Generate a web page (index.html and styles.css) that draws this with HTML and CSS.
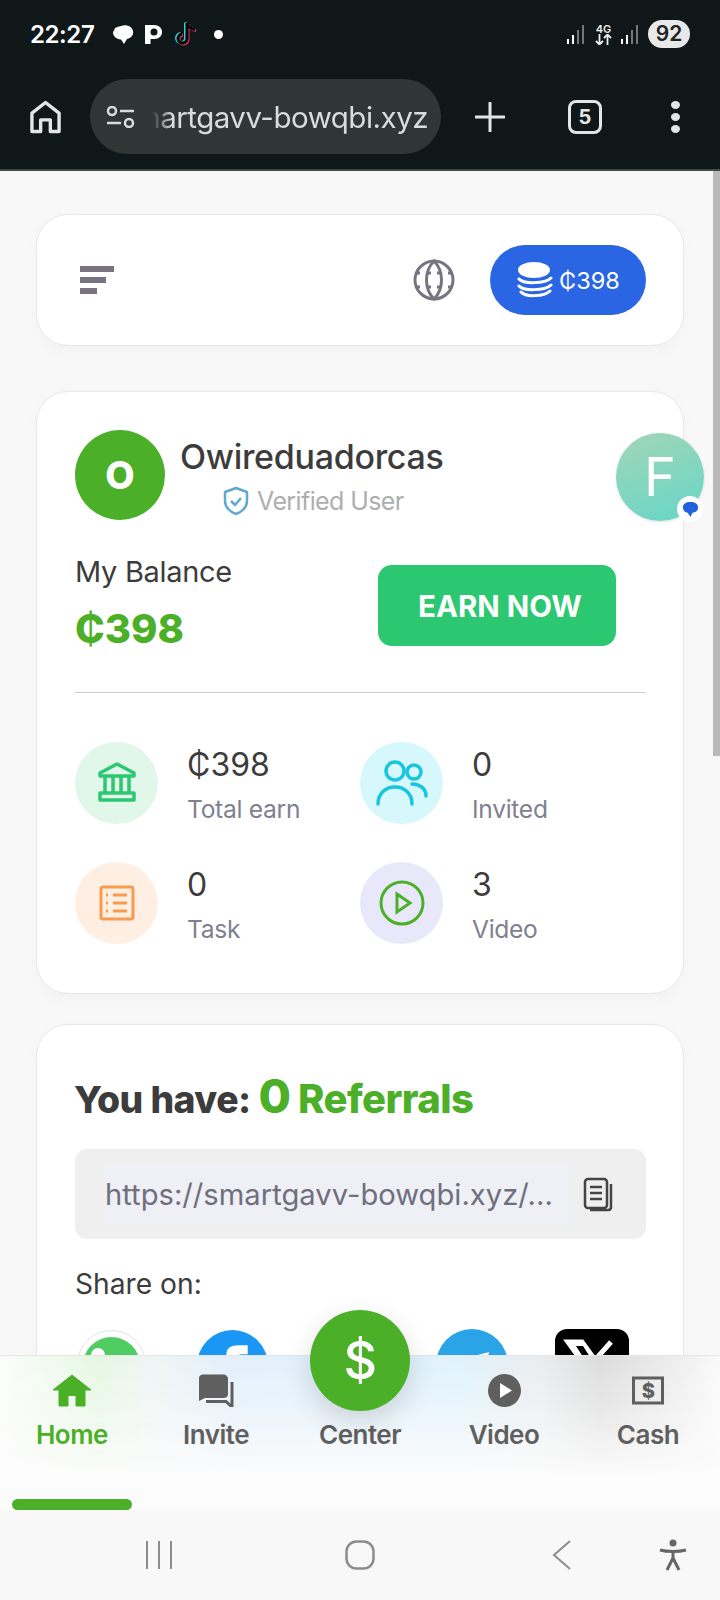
FILE: index.html
```html
<!DOCTYPE html>
<html lang="en">
<head>
	<title>Home</title>
	<meta charset="utf-8">
	<link rel="stylesheet" href="styles.css">
</head>
<body>
	<div class="topbars">
		<div class="status">
			<span class="time">22:27</span>
			<svg class="st-bubble" viewBox="0 0 22 21"><path d="M9 2C14 0 20 2 21 7C22 11 19 14 15 15L12 20L9 15.500C4 15 1 12 1 8.500C1 8 1.500 7 2.500 6C2 5 3 3 9 2Z" fill="#fff"/></svg>
			<svg class="st-p" viewBox="0 0 17 20"><path d="M0 1H9C14 1 17 4 17 8C17 12 14 15 9.500 15H5.500V20H0ZM9 4.500A3.500 3.500 0 1 0 9 11.500A3.500 3.500 0 1 0 9 4.500Z" fill="#fff" fill-rule="evenodd"/></svg>
			<svg class="st-tt" viewBox="0 0 24 26">
				<path d="M14 2V17.500A4.500 4.500 0 1 1 9 13M14 2C15 6 18 8 22 8.500" fill="none" stroke="#2bd3d8" stroke-width="3" transform="translate(-1.500 -.5)"/>
				<path d="M14 2V17.500A4.500 4.500 0 1 1 9 13M14 2C15 6 18 8 22 8.500" fill="none" stroke="#e8305a" stroke-width="3" transform="translate(1 1)"/>
				<path d="M14 2V17.500A4.500 4.500 0 1 1 9 13M14 2C15 6 18 8 22 8.500" fill="none" stroke="#000" stroke-width="3"/>
			</svg>
			<span class="st-dot"></span>
			<span class="st-right">
				<svg class="st-signal" viewBox="0 0 19 19"><path d="M1 14v5M6 10v9" stroke="#fff" stroke-width="2"/><path d="M11 5v14M16 0v19" stroke="#777" stroke-width="2"/></svg>
				<span class="st-net"><b>4G</b><svg viewBox="0 0 17 11"><path d="M4.500 0V10M1 7L4.500 10.500L8 7M12.500 11V1M9 4L12.500 .5L16 4" fill="none" stroke="#eee" stroke-width="1.800"/></svg></span>
				<svg class="st-signal" viewBox="0 0 19 19"><path d="M1 14v5M6 10v9" stroke="#fff" stroke-width="2"/><path d="M11 5v14M16 0v19" stroke="#777" stroke-width="2"/></svg>
				<span class="battery">92</span>
			</span>
		</div>
		<div class="toolbar">
			<svg class="tb-home" viewBox="0 0 32 34"><path d="M2 32V13L16 2L30 13V32H21V20H11V32Z" fill="none" stroke="#e3e6e6" stroke-width="3.500" stroke-linejoin="round"/></svg>
			<div class="urlbar">
				<svg class="tb-tune" viewBox="0 0 29 22" fill="none" stroke="#d8dcdc" stroke-width="2.500"><circle cx="6" cy="5" r="4"/><path d="M14 5H28M1 17H15"/><circle cx="23" cy="17" r="4"/></svg>
				<div class="url"><span>smartgavv-bowqbi.xyz</span></div>
			</div>
			<svg class="tb-plus" viewBox="0 0 30 30"><path d="M15 1V29M1 15H29" stroke="#e3e6e6" stroke-width="3" stroke-linecap="round"/></svg>
			<span class="tabs">5</span>
			<span class="menu"><i></i><i></i><i></i></span>
		</div>
	</div>

	<div class="page">
		<div class="card topcard">
			<div class="filter"><i></i><i></i><i></i></div>
			<svg class="globe" viewBox="0 0 42 42" fill="none" stroke="#77747f" stroke-width="3"><circle cx="21" cy="21" r="19"/><path d="M21 2C11 12 11 30 21 40C31 30 31 12 21 2Z"/><path d="M15 14H18M24 14H27M15 28H18M24 28H27M3 14H7M35 14H39M3 28H7M35 28H39"/></svg>
			<div class="coinpill">
				<svg class="coins" viewBox="0 0 36 36"><ellipse cx="17" cy="8" rx="16" ry="8" fill="#fff"/><path d="M2 17C6 22 28 22 34 16M2 24C6 29 28 29 34 23M4 30C8 35 27 35 33 29" fill="none" stroke="#fff" stroke-width="3" stroke-linecap="round"/></svg>
				<span>₵398</span>
			</div>
		</div>

		<div class="card maincard">
			<div class="profile">
				<div class="avatar">O</div>
				<div>
					<div class="username">Owireduadorcas</div>
					<div class="verified">
						<svg viewBox="0 0 26 30" fill="none"><path d="M13 2L24 6V15C24 21 19 26 13 28C7 26 2 21 2 15V6Z" stroke="#5ea9cc" stroke-width="2.500" stroke-linejoin="round"/><path d="M8 15L12 19L18 12" stroke="#5ea9cc" stroke-width="2.500"/></svg>
						<span>Verified User</span>
					</div>
				</div>
			</div>
			<div class="balance">
				<div>
					<div class="bal-label">My Balance</div>
					<div class="bal-value">₵398</div>
				</div>
				<div class="earn">EARN NOW</div>
			</div>
			<div class="divider"></div>
			<div class="stats">
				<div class="stat">
					<div class="stat-ic green">
						<svg viewBox="0 0 40 42" fill="none" stroke="#2bc871" stroke-width="3.500" stroke-linejoin="round"><path d="M3 14V11L20 2L37 11V14ZM8 15V30M16 15V30M24 15V30M32 15V30M3 31H37V38H3Z"/></svg>
					</div>
					<div><div class="num">₵398</div><div class="lbl">Total earn</div></div>
				</div>
				<div class="stat">
					<div class="stat-ic cyan">
						<svg viewBox="0 0 52 46" fill="none" stroke="#18c6e0" stroke-width="3.500" stroke-linecap="round"><circle cx="19" cy="11" r="9"/><path d="M2 44C2 34 9 27 19 27C29 27 36 34 36 44"/><circle cx="38" cy="12" r="7"/><path d="M36 24C43 24 50 28 50 36"/></svg>
					</div>
					<div><div class="num">0</div><div class="lbl">Invited</div></div>
				</div>
				<div class="stat">
					<div class="stat-ic orange">
						<svg viewBox="0 0 36 36" fill="none" stroke="#f79c4f" stroke-width="3"><rect x="2" y="2" width="32" height="32" rx="2"/><path d="M14 10H28M14 18H28M14 26H28M7 10H9M7 18H9M7 26H9"/></svg>
					</div>
					<div><div class="num">0</div><div class="lbl">Task</div></div>
				</div>
				<div class="stat">
					<div class="stat-ic violet">
						<svg viewBox="0 0 46 46" fill="none" stroke="#4caf28" stroke-width="3"><circle cx="23" cy="23" r="21"/><path d="M18 14L31 23L18 32Z"/></svg>
					</div>
					<div><div class="num">3</div><div class="lbl">Video</div></div>
				</div>
			</div>
		</div>

		<div class="card refcard">
			<div class="ref-title">You have: <em class="big">0</em> <em class="refs">Referrals</em></div>
			<div class="linkbox">
				<div class="linktext">https://smartgavv-bowqbi.xyz/...</div>
				<svg class="copy" viewBox="0 0 30 35" fill="none" stroke="#444" stroke-width="2.500"><rect x="2" y="2" width="22" height="29" rx="3"/><path d="M7 10H19M7 16H19M7 22H19"/><path d="M28 7V30C28 32 27 33 25 33H7"/></svg>
			</div>
			<div class="share-label">Share on:</div>
			<div class="shares">
				<svg class="sh-wa" viewBox="0 0 69 69"><circle cx="34.500" cy="34.500" r="34" fill="#fff" stroke="#e2e2e2"/><circle cx="34.500" cy="35.500" r="28.500" fill="#50cd62"/><circle cx="21" cy="25" r="7" fill="#fff"/></svg>
				<svg class="sh-fb" viewBox="0 0 70 70"><circle cx="35" cy="35" r="35" fill="#1a97f5"/><path d="M29 70V40H21V28H29V24C29 18 33 15 41 15H50V24H44C41 24 40 25 40 28V30H50V40H40V70Z" fill="#fff"/></svg>
				<svg class="sh-tg" viewBox="0 0 72 72"><circle cx="36" cy="36" r="36" fill="#2aa4e6"/><path d="M12 34L53 23L48 50Z" fill="#fff"/></svg>
				<svg class="sh-x" viewBox="0 0 74 72"><rect width="74" height="72" rx="12" fill="#000"/><path d="M13 13H27L61 60H47ZM56 13L40 31M18 60L33 42" fill="#fff" stroke="#fff" stroke-width="5"/><path d="M21 17L28 17L53 56H46Z" fill="#000"/></svg>
			</div>
		</div>

		<div class="scrollthumb"></div>
		<div class="chatfab">F
			<span class="chatbadge"><svg viewBox="0 0 18 18"><path d="M9 1C4 1 1 3 1 7C1 10 3 12 6 12.500L9 17L11 12.500C15 12 17 10 17 7C17 3 14 1 9 1Z" fill="#1f62dd"/></svg></span>
		</div>
	</div>

	<div class="bottomnav">
		<div class="navitem active">
			<svg class="ic-home" viewBox="0 0 40 32"><path d="M20 .5L39 15.500H33V31.500H24V21H16V31.500H7V15.500H1Z" fill="#4caf28" stroke="#4caf28" stroke-linejoin="round"/></svg>
			<span>Home</span>
		</div>
		<div class="navitem">
			<svg class="ic-invite" viewBox="0 0 36 33"><path d="M5 .5H25C28 .5 30 2.500 30 5V20C30 23 28 24 25 24H7L1 27V4C1 2 3 .5 5 .5Z" fill="#5f5f5f"/><path d="M34 8V33L28 27.500H8" fill="none" stroke="#5f5f5f" stroke-width="3"/></svg>
			<span>Invite</span>
		</div>
		<div class="navitem">
			<div class="centerbtn">$</div>
			<span class="nav-gap">Center</span>
		</div>
		<div class="navitem">
			<svg class="ic-video" viewBox="0 0 33 33"><circle cx="16.500" cy="16.500" r="16.500" fill="#5f5f5f"/><path d="M12 9L24 16.500L12 24Z" fill="#fff"/></svg>
			<span>Video</span>
		</div>
		<div class="navitem">
			<svg class="ic-cash" viewBox="0 0 32 33"><path d="M1.500 4H30.500V29H1.500Z" fill="none" stroke="#5f5f5f" stroke-width="3"/><text x="16" y="23.500" text-anchor="middle" class="cash-s">$</text></svg>
			<span>Cash</span>
		</div>
		<div class="indicator"></div>
	</div>

	<div class="sysnav">
		<svg class="sys-recent" viewBox="0 0 28 28"><path d="M2 0V28M14 0V28M26 0V28" stroke="#8d8d8d" stroke-width="2"/></svg>
		<svg class="sys-home" viewBox="0 0 30 30"><rect x="1.500" y="1.500" width="27" height="27" rx="10" fill="none" stroke="#8d8d8d" stroke-width="2.500"/></svg>
		<svg class="sys-back" viewBox="0 0 20 30"><path d="M18 1L2 15L18 29" fill="none" stroke="#8d8d8d" stroke-width="2"/></svg>
		<svg class="sys-acc" viewBox="0 0 28 32"><circle cx="14" cy="4" r="3.500" fill="#666"/><path d="M1 11C8 13 20 13 27 11M14 12V20M14 19L8 31M14 19L20 31" fill="none" stroke="#666" stroke-width="3"/></svg>
	</div>
</body>
</html>
```

FILE: styles.css
```css
* {
	box-sizing: border-box;
}
html, body {
	margin: 0;
	padding: 0;
}
body {
	width: 720px;
	height: 1600px;
	overflow: hidden;
	display: flex;
	flex-direction: column;
	font-family: Inter, "Liberation Sans", sans-serif;
	color: #3c3c3c;
	background: #f8f8f8;
}

/* phone status bar + browser toolbar */
.topbars {
	height: 171px;
	flex: none;
	background: #101718;
	border-bottom: 2px solid #43484a;
}
.status {
	height: 68px;
	display: flex;
	align-items: center;
	padding: 0 30px 0 30px;
}
.time {
	color: #fff;
	font-size: 24px;
	font-weight: 600;
	letter-spacing: -0.4px;
	width: 82px;
}
.st-bubble {
	width: 22px;
	height: 21px;
}
.st-p {
	width: 17px;
	height: 20px;
	margin-left: 11px;
}
.st-tt {
	width: 24px;
	height: 26px;
	margin-left: 11px;
}
.st-dot {
	width: 9px;
	height: 9px;
	border-radius: 50%;
	background: #fff;
	margin-left: 17px;
}
.st-right {
	margin-left: auto;
	display: flex;
	align-items: center;
}
.st-signal {
	width: 19px;
	height: 19px;
}
.st-net {
	width: 17px;
	margin: 0 9px;
	display: flex;
	flex-direction: column;
	align-items: center;
	color: #eee;
	font-size: 11px;
	line-height: 10px;
}
.st-net b {
	font-weight: 600;
}
.st-net svg {
	width: 17px;
	height: 11px;
}
.battery {
	width: 42px;
	height: 28px;
	margin-left: 8px;
	border-radius: 14px;
	background: #e9e9e9;
	color: #222;
	font-size: 21px;
	font-weight: 600;
	text-align: center;
	line-height: 28px;
}
.toolbar {
	height: 101px;
	display: flex;
	align-items: flex-start;
	padding: 11px 0 0 30px;
}
.tb-home {
	width: 31px;
	height: 34px;
	margin-top: 21px;
}
.urlbar {
	width: 351px;
	height: 75px;
	margin-left: 29px;
	border-radius: 38px;
	background: #303535;
	display: flex;
	align-items: center;
	padding: 0 13px 0 16px;
}
.tb-tune {
	width: 29px;
	height: 22px;
	flex: none;
}
.url {
	width: 276px;
	margin-left: 17px;
	overflow: hidden;
	display: flex;
	justify-content: flex-end;
	white-space: nowrap;
	color: #d8dcdc;
	font-size: 29.500px;
	letter-spacing: -0.5px;
	-webkit-mask-image: linear-gradient(to right, transparent, #000 20px);
	mask-image: linear-gradient(to right, transparent, #000 20px);
}
.tb-plus {
	width: 30px;
	height: 30px;
	margin: 23px 0 0 34px;
}
.tabs {
	width: 34px;
	height: 34px;
	margin: 21px 0 0 63px;
	border: 3px solid #e3e6e6;
	border-radius: 8px;
	color: #e3e6e6;
	font-size: 20px;
	font-weight: 700;
	text-align: center;
	line-height: 28px;
}
.menu {
	margin: 22px 0 0 69px;
	display: flex;
	flex-direction: column;
	gap: 4px;
}
.menu i {
	width: 9px;
	height: 8px;
	border-radius: 50%;
	background: #e3e6e6;
}

/* page */
.page {
	position: relative;
	height: 1184px;
	flex: none;
	overflow: hidden;
	padding: 43px 36px 0;
}
.scrollthumb {
	position: absolute;
	right: 0;
	top: 0;
	width: 7px;
	height: 585px;
	background: #b9b9b9;
}
.card {
	background: #fff;
	border: 1px solid #e8e8e8;
	border-radius: 32px;
	box-shadow: 0 6px 18px rgba(0, 0, 0, 0.025);
}
.topcard {
	height: 132px;
	display: flex;
	align-items: center;
	padding: 0 37px 0 43px;
}
.filter {
	display: flex;
	flex-direction: column;
	gap: 5px;
}
.filter i {
	height: 6px;
	background: #77747f;
}
.filter i:nth-child(1) {
	width: 34px;
}
.filter i:nth-child(2) {
	width: 26px;
}
.filter i:nth-child(3) {
	width: 17px;
}
.globe {
	width: 42px;
	height: 42px;
	margin-left: auto;
}
.coinpill {
	width: 156px;
	height: 70px;
	margin-left: 35px;
	border-radius: 35px;
	background: #2a66e4;
	color: #fff;
	display: flex;
	align-items: center;
	padding-left: 27px;
	gap: 6px;
	font-size: 23.500px;
}
.coins {
	width: 36px;
	height: 36px;
	flex: none;
}
.maincard {
	height: 603px;
	margin-top: 45px;
	padding: 38px 37px 0 38px;
}
.profile {
	display: flex;
	gap: 15px;
}
.avatar {
	width: 90px;
	height: 90px;
	border-radius: 50%;
	background: #4caf28;
	color: #fff;
	font-size: 38px;
	font-weight: 800;
	display: flex;
	align-items: center;
	justify-content: center;
}
.username {
	margin-top: 7px;
	font-size: 34px;
	line-height: 40px;
	font-weight: 500;
	letter-spacing: -0.3px;
}
.verified {
	margin-top: 9px;
	padding-left: 43px;
	display: flex;
	align-items: center;
	gap: 8px;
	color: #aeaeae;
	font-size: 25px;
	letter-spacing: -0.6px;
}
.verified svg {
	width: 26px;
	height: 30px;
}
.balance {
	height: 81px;
	margin-top: 45px;
	display: flex;
	justify-content: space-between;
	padding-right: 30px;
}
.bal-label {
	font-size: 29px;
	line-height: 34px;
	margin-top: -10px;
	letter-spacing: -0.3px;
}
.bal-value {
	margin-top: 16px;
	font-size: 40px;
	line-height: 48px;
	font-weight: 800;
	color: #4caf28;
}
.earn {
	width: 238px;
	height: 81px;
	border-radius: 14px;
	background: #2bc871;
	color: #fff;
	font-size: 29.500px;
	font-weight: 700;
	display: flex;
	align-items: center;
	justify-content: center;
	padding-left: 6px;
}
.divider {
	margin-top: 46px;
	height: 1px;
	background: #cccccc;
}
.stats {
	margin-top: 49px;
	display: grid;
	grid-template-columns: 285px 1fr;
	row-gap: 37.500px;
}
.stat {
	display: flex;
	gap: 29px;
}
.stat-ic {
	width: 83px;
	height: 82px;
	border-radius: 50%;
	display: flex;
	align-items: center;
	justify-content: center;
}
.green {
	background: #e1f7ea;
}
.cyan {
	background: #d6f7fb;
}
.orange {
	background: #ffefe3;
}
.violet {
	background: #e9e8fb;
}
.green svg {
	width: 40px;
	height: 42px;
}
.cyan svg {
	width: 52px;
	height: 46px;
}
.orange svg {
	width: 36px;
	height: 36px;
}
.violet svg {
	width: 46px;
	height: 46px;
}
.num {
	font-size: 32px;
	line-height: 40px;
	margin-top: 3px;
}
.lbl {
	margin-top: 9px;
	font-size: 24.600px;
	line-height: 30px;
	color: #80808f;
	letter-spacing: -0.3px;
}
.refcard {
	height: 400px;
	margin-top: 30px;
	padding: 45px 37px 0 38px;
}
.ref-title {
	margin-left: -1px;
	font-size: 37.300px;
	line-height: 52px;
	font-weight: 800;
	letter-spacing: -0.5px;
}
.ref-title em {
	font-style: normal;
	color: #4caf28;
}
.ref-title .big {
	font-size: 47px;
}
.ref-title .refs {
	font-size: 40px;
	letter-spacing: -0.6px;
}
.linkbox {
	margin-top: 23px;
	height: 90px;
	border-radius: 12px;
	background: #efefef;
	display: flex;
	align-items: center;
	padding-left: 30px;
}
.linktext {
	width: 468px;
	height: 59px;
	background: #eef0f6;
	color: #6f6f7d;
	font-size: 29.200px;
	line-height: 59px;
	white-space: nowrap;
	overflow: hidden;
}
.copy {
	width: 30px;
	height: 35px;
	margin-left: 10px;
}
.share-label {
	margin-top: 27px;
	font-size: 28.200px;
	line-height: 36px;
}
.shares {
	margin-top: 28px;
	padding-left: 2px;
	display: flex;
	align-items: flex-start;
}
.sh-wa {
	width: 69px;
	height: 69px;
	flex: none;
}
.sh-fb {
	width: 71px;
	height: 71px;
	flex: none;
	margin-left: 51px;
}
.sh-tg {
	width: 72px;
	height: 72px;
	flex: none;
	margin-left: 168px;
	margin-top: -1px;
}
.sh-x {
	width: 74px;
	height: 72px;
	flex: none;
	margin-left: 47px;
	margin-top: -1px;
}
.chatfab {
	position: absolute;
	left: 616px;
	top: 262px;
	width: 88px;
	height: 88px;
	border-radius: 50%;
	background: linear-gradient(160deg, #a2d6b6, #66d6c8);
	box-shadow: 0 1px 3px rgba(0, 0, 0, 0.12);
	color: #fff;
	font-size: 54px;
	text-align: center;
	line-height: 88px;
}
.chatbadge {
	position: absolute;
	right: 1px;
	bottom: -1px;
	width: 26px;
	height: 26px;
	border-radius: 50%;
	background: #fff;
	display: flex;
	align-items: center;
	justify-content: center;
}
.chatbadge svg {
	width: 17px;
	height: 17px;
}

/* bottom nav */
.bottomnav {
	position: relative;
	height: 155px;
	flex: none;
	display: grid;
	grid-template-columns: repeat(5, 144px);
	border-top: 1px solid #e6e6e6;
	background: #fcfcfc;
}
.bottomnav::before {
	content: "";
	position: absolute;
	left: 0;
	right: 0;
	top: 0;
	height: 125px;
	background: linear-gradient(90deg, #fbfdfb 0, #e4f7e1 100px, #eef5f3 150px, #e1effb 230px, #e1f1fc 360px, #dff2fc 460px, #e9ecee 540px, #dcdcdc 600px, #eeeeee 680px, #fafafa 720px);
	-webkit-mask-image: linear-gradient(to bottom, #000, rgba(0, 0, 0, 0.65) 50px, transparent 120px);
	mask-image: linear-gradient(to bottom, #000, rgba(0, 0, 0, 0.65) 50px, transparent 120px);
}
.navitem {
	position: relative;
	display: flex;
	flex-direction: column;
	align-items: center;
	padding-top: 18px;
	color: #5f5f5f;
	font-size: 26px;
	font-weight: 600;
	letter-spacing: -0.5px;
}
.navitem svg {
	height: 33px;
}
.ic-home {
	width: 40px;
}
.ic-invite {
	width: 36px;
}
.ic-video {
	width: 33px;
}
.ic-cash {
	width: 32px;
}
.navitem span {
	margin-top: 11px;
	line-height: 34px;
}
.navitem .nav-gap {
	margin-top: 44px;
}
.active {
	color: #4caf28;
}
.cash-s {
	font-family: Inter, sans-serif;
	font-size: 20px;
	font-weight: 800;
	fill: #5f5f5f;
}
.centerbtn {
	position: absolute;
	left: 22px;
	top: -46px;
	width: 100px;
	height: 101px;
	border-radius: 50%;
	background: #4caf28;
	box-shadow: 0 10px 28px rgba(0, 0, 0, 0.14);
	color: #fff;
	font-size: 52px;
	font-weight: 500;
	text-align: center;
	line-height: 101px;
}
.indicator {
	position: absolute;
	left: 12px;
	bottom: 0;
	width: 120px;
	height: 11px;
	border-radius: 6px;
	background: #4caf28;
}

/* android nav */
.sysnav {
	height: 90px;
	flex: none;
	position: relative;
	display: flex;
	align-items: center;
	background: #f8f8f8;
	padding: 0 33px 0 145px;
}
.sys-recent {
	width: 28px;
	height: 28px;
}
.sys-home {
	width: 30px;
	height: 30px;
	margin-left: 172px;
}
.sys-back {
	width: 20px;
	height: 30px;
	margin-left: 177px;
}
.sys-acc {
	width: 28px;
	height: 32px;
	margin-left: auto;
}
```
